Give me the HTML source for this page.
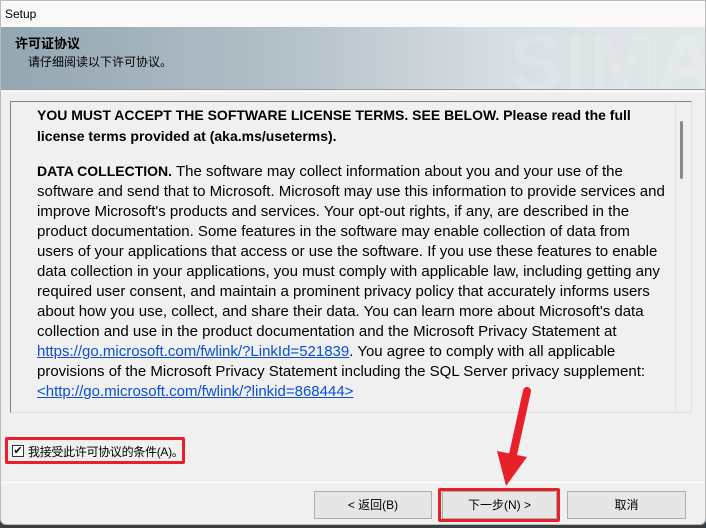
<!DOCTYPE html>
<html><head><meta charset="utf-8"><style>
*{margin:0;padding:0;box-sizing:border-box}
body{width:706px;height:528px;background:#3a3f44;position:relative;overflow:hidden;font-family:"Liberation Sans","Noto Sans CJK SC",sans-serif}
.win{position:absolute;left:0;top:0;width:706px;height:525px;background:#f0f0f0;border-radius:0 0 6px 6px;border:1px solid #bbb;overflow:hidden}
.title{position:absolute;left:0;top:0;width:706px;height:26px;background:#f9f9f9;font-size:12px;line-height:26px;padding-left:4px;color:#000}
.hdr{position:absolute;left:0;top:26px;width:706px;height:63px;background:linear-gradient(90deg,#93a6b2 0%,#b3c0c8 40%,#d7dee2 70%,#e3e8eb 100%);border-bottom:1px solid #a0a0a0;overflow:hidden}
.hdr .h1{position:absolute;left:14px;top:6px;font-size:13px;font-weight:bold;color:#000}
.hdr .h2{position:absolute;left:27px;top:26px;font-size:12px;color:#000}
.hdr .wm{position:absolute;left:508px;top:-10px;font-size:80px;font-weight:bold;color:rgba(255,255,255,0.12);letter-spacing:2px}
.sep1{position:absolute;left:0;top:90px;width:706px;height:1px;background:#fff}
.box{position:absolute;left:9px;top:100px;width:682px;height:312px;border:1px solid #828282;border-right-color:#e0e0e0;border-bottom-color:#e0e0e0;background:#f0f0f0;overflow:hidden}
.txt{position:absolute;left:26px;top:3px;font-size:15px;line-height:20px;color:#000;white-space:nowrap;letter-spacing:0}
.txt b{font-weight:bold;font-size:14px}
.txt a{color:#0a4fd6;text-decoration:underline}
.sb{position:absolute;right:0;top:0;width:16px;height:310px;border-left:1px solid #e4e4e4}
.thumb{position:absolute;left:669px;top:19px;width:3px;height:58px;background:#8a8a8a;border-radius:2px}
.chk{position:absolute;left:4px;top:436px;width:180px;height:27px;border:3px solid #e8202a;border-radius:2px;white-space:nowrap}
.cb{position:absolute;left:4px;top:5px;width:12px;height:12px;border:1px solid #333;background:#fff;font-size:11px;line-height:10px;text-align:center}
.chk span{position:absolute;left:20px;top:3px;font-size:12px;color:#000;letter-spacing:-0.3px}
.sep2{position:absolute;left:0;top:481px;width:706px;height:1px;background:#d8d8d8;border-bottom:1px solid #fff}
.btn{position:absolute;top:490px;height:28px;border:1px solid #adadad;background:#e6e6e6;font-size:12px;line-height:26px;text-align:center;color:#000}
.red{position:absolute;left:437px;top:487px;width:122px;height:34px;border:3px solid #e8202a;border-radius:2px}
</style></head><body>
<div class="win">
<div class="title">Setup</div>
<div class="hdr"><div class="wm">SIMA</div><div class="h1">许可证协议</div><div class="h2">请仔细阅读以下许可协议。</div></div>
<div class="sep1"></div>
<div class="box">
<div class="txt">
<b>YOU MUST ACCEPT THE SOFTWARE LICENSE TERMS. SEE BELOW. Please read the full</b><br>
<b>license terms provided at (aka.ms/useterms).</b><br>
<div style="height:14px"></div>
<b>DATA COLLECTION.</b> The software may collect information about you and your use of the<br>
software and send that to Microsoft. Microsoft may use this information to provide services and<br>
improve Microsoft's products and services. Your opt-out rights, if any, are described in the<br>
product documentation. Some features in the software may enable collection of data from<br>
users of your applications that access or use the software. If you use these features to enable<br>
data collection in your applications, you must comply with applicable law, including getting any<br>
required user consent, and maintain a prominent privacy policy that accurately informs users<br>
about how you use, collect, and share their data. You can learn more about Microsoft's data<br>
collection and use in the product documentation and the Microsoft Privacy Statement at<br>
<a>https://go.microsoft.com/fwlink/?LinkId=521839</a>. You agree to comply with all applicable<br>
provisions of the Microsoft Privacy Statement including the SQL Server privacy supplement:<br>
<a>&lt;http://go.microsoft.com/fwlink/?linkid=868444&gt;</a>
</div>
<div class="sb"></div>
<div class="thumb"></div>
</div>
<div class="chk"><div class="cb">✔</div><span>我接受此许可协议的条件(A)。</span></div>
<div class="sep2"></div>
<div class="btn" style="left:313px;width:118px">&lt; 返回(B)</div>
<div class="btn" style="left:441px;width:115px">下一步(N) &gt;</div>
<div class="btn" style="left:566px;width:119px">取消</div>
<div class="red"></div>
<svg style="position:absolute;left:0;top:0" width="706" height="528">
<line x1="526" y1="390" x2="511" y2="458" stroke="#e8202a" stroke-width="8" stroke-linecap="round"/>
<polygon points="496,450 526,456 505,485" fill="#e8202a"/>
</svg>
</div>
</body></html>
